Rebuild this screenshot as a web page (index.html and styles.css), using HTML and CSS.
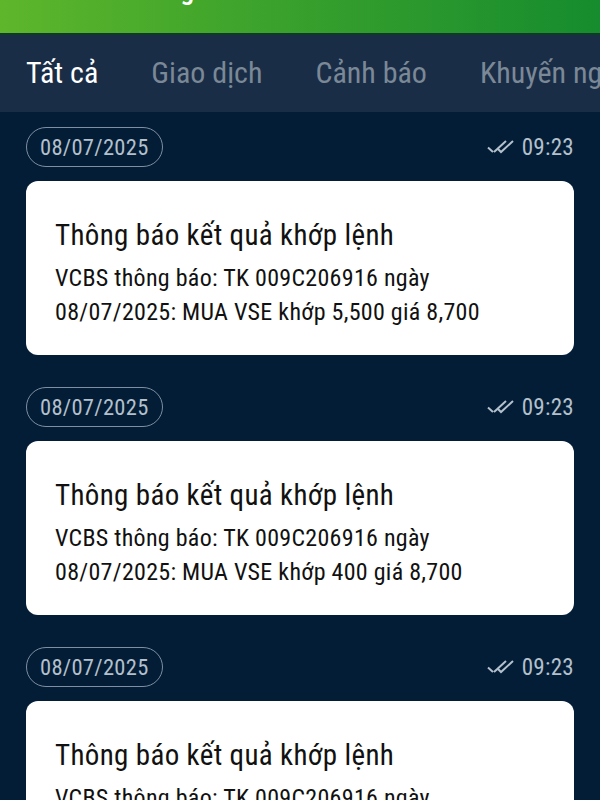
FILE: index.html
```html
<!DOCTYPE html>
<html lang="vi">
<head>
<meta charset="utf-8">
<title>Thông báo</title>
<link rel="stylesheet" href="styles.css">
</head>
<body>
<div class="app">
  <header class="topbar">
    <div class="topbar-title">Thông báo</div>
  </header>
  <nav class="tabs">
    <span class="tab active">Tất cả</span>
    <span class="tab">Giao dịch</span>
    <span class="tab">Cảnh báo</span>
    <span class="tab">Khuyến ng</span>
  </nav>
  <main class="list">
    <section class="group">
      <div class="meta">
        <span class="date">08/07/2025</span>
        <span class="time"><svg class="check" viewBox="0 0 28 16" width="28" height="16"><path d="M1 8.5 L6 13 M7 13 L19 2 M11 10 L14 13 L26 2" fill="none" stroke="currentColor" stroke-width="2"/></svg>09:23</span>
      </div>
      <article class="card">
        <h2 class="card-title">Thông báo kết quả khớp lệnh</h2>
        <p class="card-body">VCBS thông báo: TK 009C206916 ngày 08/07/2025: MUA VSE khớp 5,500 giá 8,700</p>
      </article>
    </section>
    <section class="group">
      <div class="meta">
        <span class="date">08/07/2025</span>
        <span class="time"><svg class="check" viewBox="0 0 28 16" width="28" height="16"><path d="M1 8.5 L6 13 M7 13 L19 2 M11 10 L14 13 L26 2" fill="none" stroke="currentColor" stroke-width="2"/></svg>09:23</span>
      </div>
      <article class="card">
        <h2 class="card-title">Thông báo kết quả khớp lệnh</h2>
        <p class="card-body">VCBS thông báo: TK 009C206916 ngày 08/07/2025: MUA VSE khớp 400 giá 8,700</p>
      </article>
    </section>
    <section class="group">
      <div class="meta">
        <span class="date">08/07/2025</span>
        <span class="time"><svg class="check" viewBox="0 0 28 16" width="28" height="16"><path d="M1 8.5 L6 13 M7 13 L19 2 M11 10 L14 13 L26 2" fill="none" stroke="currentColor" stroke-width="2"/></svg>09:23</span>
      </div>
      <article class="card">
        <h2 class="card-title">Thông báo kết quả khớp lệnh</h2>
        <p class="card-body">VCBS thông báo: TK 009C206916 ngày 08/07/2025: MUA VSE khớp 400 giá 8,700</p>
      </article>
    </section>
  </main>
</div>
</body>
</html>
```
FILE: styles.css
```css
* { box-sizing: border-box; }
html, body { margin: 0; padding: 0; }
body {
  width: 600px;
  height: 800px;
  overflow: hidden;
  background: #031d36;
  font-family: Roboto, "Noto Sans", sans-serif;
  font-stretch: 75%;
}
.app { display: flex; flex-direction: column; height: 800px; overflow: hidden; }
.topbar {
  height: 35px;
  flex: none;
  background: linear-gradient(90deg, #5eb62b 0%, #3ea42c 40%, #168c2e 100%);
  border-bottom: 2px solid #0e3b24;
  overflow: hidden;
}
.topbar-title {
  color: #fff;
  font-size: 28px;
  line-height: 28px;
  margin-top: -24px;
  padding-left: 124px;
  font-weight: 500;
}
.tabs {
  height: 77px;
  flex: none;
  background: #1a2d47;
  display: flex;
  align-items: center;
  gap: 53px;
  padding-left: 26px;
  padding-bottom: 2px;
  white-space: nowrap;
  overflow: hidden;
}
.tab {
  font-size: 30px;
  color: #7b8896;
  line-height: 1;
}
.tab.active { color: #ffffff; }
.list { padding: 15px 26px 0 26px; }
.group { margin-bottom: 32px; }
.meta {
  display: flex;
  justify-content: space-between;
  align-items: center;
  height: 40px;
}
.date {
  height: 40px;
  border: 1px solid #7e8fa3;
  border-radius: 20px;
  padding: 0 13px;
  display: flex;
  align-items: center;
  font-size: 22.5px;
  letter-spacing: 0.3px;
  color: #b4c0cc;
}
.time {
  display: flex;
  align-items: center;
  gap: 7px;
  font-size: 23px;
  letter-spacing: 0.3px;
  color: #b4c0cc;
}
.check { color: #b4c0cc; }
.card {
  margin-top: 14px;
  background: #ffffff;
  border-radius: 12px;
  height: 174px;
  padding: 37px 29px 0 29px;
}
.card-title {
  margin: 0;
  font-size: 29px;
  font-weight: 400;
  letter-spacing: 0.35px;
  color: #111;
  line-height: 34px;
}
.card-body {
  margin: 9px 0 0 0;
  font-size: 24px;
  letter-spacing: 0.28px;
  line-height: 34px;
  color: #111;
  max-width: 480px;
}
```
